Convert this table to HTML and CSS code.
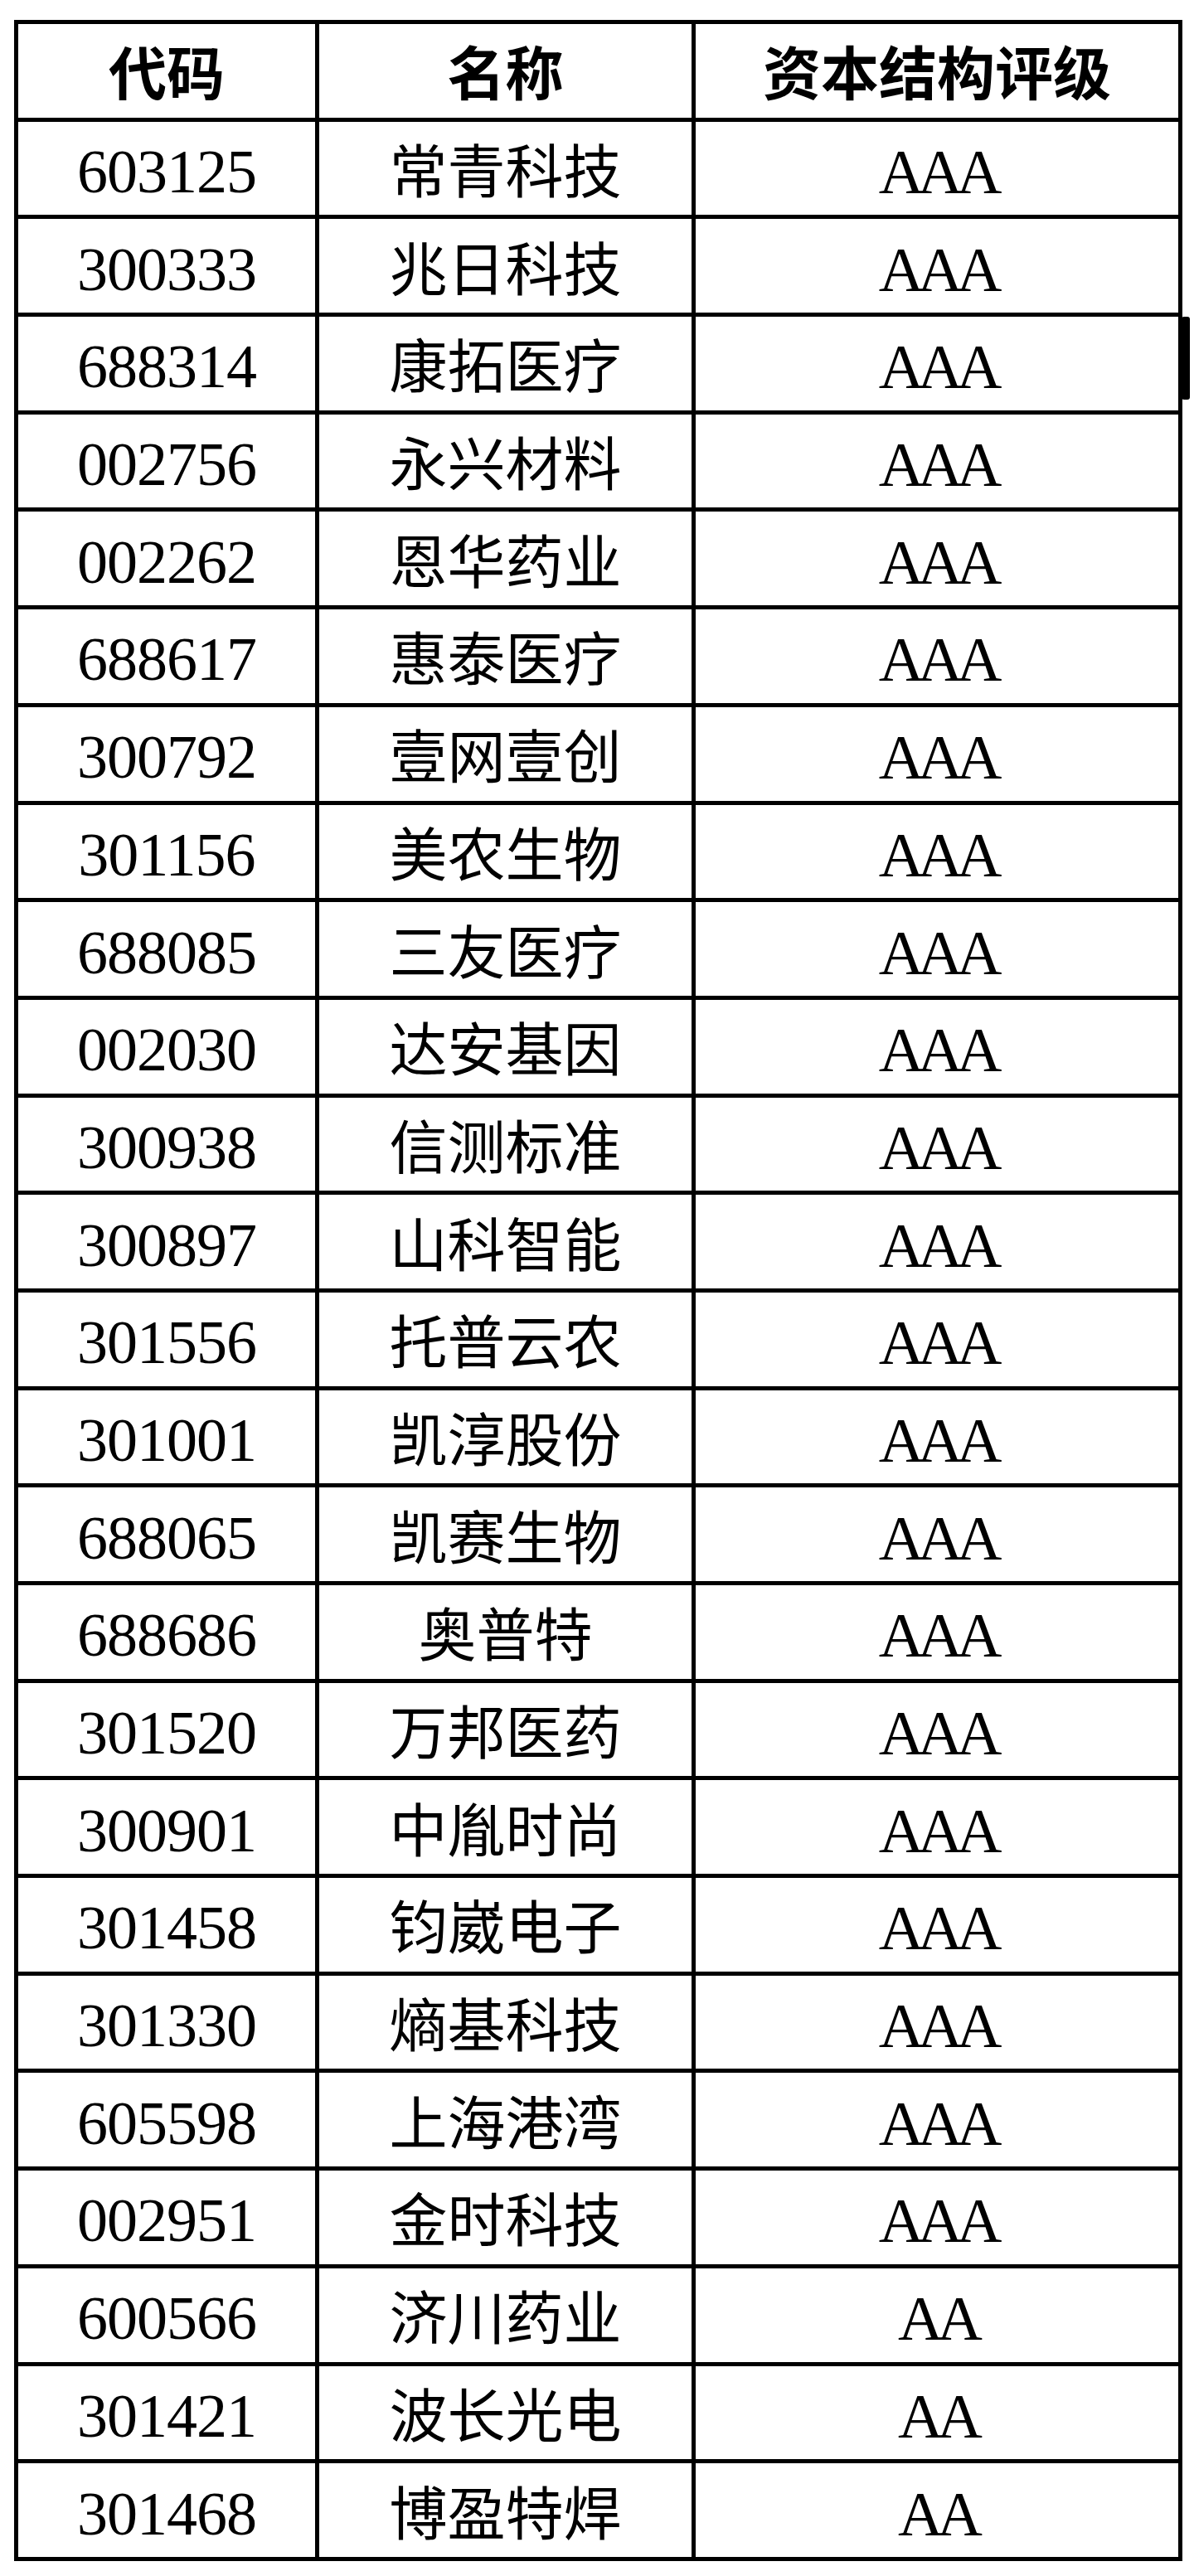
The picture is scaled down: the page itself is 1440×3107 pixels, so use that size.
FILE: index.html
```html
<!DOCTYPE html>
<html lang="zh-CN">
<head>
<meta charset="utf-8">
<title>资本结构评级</title>
<link rel="stylesheet" href="styles.css">
</head>
<body>
<div class="page">
<table class="rating-table">
<colgroup><col class="c1"><col class="c2"><col class="c3"></colgroup>
<thead>
<tr class="head-row"><th>代码</th><th>名称</th><th>资本结构评级</th></tr>
</thead>
<tbody>
<tr><td class="code">603125</td><td class="name">常青科技</td><td class="grade">AAA</td></tr>
<tr><td class="code">300333</td><td class="name">兆日科技</td><td class="grade">AAA</td></tr>
<tr><td class="code">688314</td><td class="name">康拓医疗</td><td class="grade">AAA</td></tr>
<tr><td class="code">002756</td><td class="name">永兴材料</td><td class="grade">AAA</td></tr>
<tr><td class="code">002262</td><td class="name">恩华药业</td><td class="grade">AAA</td></tr>
<tr><td class="code">688617</td><td class="name">惠泰医疗</td><td class="grade">AAA</td></tr>
<tr><td class="code">300792</td><td class="name">壹网壹创</td><td class="grade">AAA</td></tr>
<tr><td class="code">301156</td><td class="name">美农生物</td><td class="grade">AAA</td></tr>
<tr><td class="code">688085</td><td class="name">三友医疗</td><td class="grade">AAA</td></tr>
<tr><td class="code">002030</td><td class="name">达安基因</td><td class="grade">AAA</td></tr>
<tr><td class="code">300938</td><td class="name">信测标准</td><td class="grade">AAA</td></tr>
<tr><td class="code">300897</td><td class="name">山科智能</td><td class="grade">AAA</td></tr>
<tr><td class="code">301556</td><td class="name">托普云农</td><td class="grade">AAA</td></tr>
<tr><td class="code">301001</td><td class="name">凯淳股份</td><td class="grade">AAA</td></tr>
<tr><td class="code">688065</td><td class="name">凯赛生物</td><td class="grade">AAA</td></tr>
<tr><td class="code">688686</td><td class="name">奥普特</td><td class="grade">AAA</td></tr>
<tr><td class="code">301520</td><td class="name">万邦医药</td><td class="grade">AAA</td></tr>
<tr><td class="code">300901</td><td class="name">中胤时尚</td><td class="grade">AAA</td></tr>
<tr><td class="code">301458</td><td class="name">钧崴电子</td><td class="grade">AAA</td></tr>
<tr><td class="code">301330</td><td class="name">熵基科技</td><td class="grade">AAA</td></tr>
<tr><td class="code">605598</td><td class="name">上海港湾</td><td class="grade">AAA</td></tr>
<tr><td class="code">002951</td><td class="name">金时科技</td><td class="grade">AAA</td></tr>
<tr><td class="code">600566</td><td class="name">济川药业</td><td class="grade">AA</td></tr>
<tr><td class="code">301421</td><td class="name">波长光电</td><td class="grade">AA</td></tr>
<tr><td class="code">301468</td><td class="name">博盈特焊</td><td class="grade">AA</td></tr>
</tbody>
</table>
<div class="scroll-thumb"></div>
</div>
</body>
</html>
```

FILE: styles.css
```css
html, body {
  margin: 0;
  padding: 0;
  background: #ffffff;
}

.page {
  position: relative;
  width: 1440px;
  padding-top: 24px;
  padding-left: 17px;
  box-sizing: border-box;
}

.rating-table {
  border-collapse: collapse;
  table-layout: fixed;
  width: 1404px;
  color: #000;
}

.c1 { width: 363px; }
.c2 { width: 454px; }
.c3 { width: 587px; }

.rating-table tr {
  height: 117.7px;
}

.rating-table th,
.rating-table td {
  border: 5px solid #000;
  padding: 0;
  text-align: center;
  vertical-align: middle;
  line-height: 1;
}

.rating-table th {
  font-family: "Noto Sans CJK SC", sans-serif;
  font-weight: 700;
  font-size: 70px;
}

.code {
  font-family: "Liberation Serif", serif;
  font-size: 74px;
  letter-spacing: -1px;
  padding-top: 8px !important;
}

.name {
  font-family: "Noto Sans CJK SC", sans-serif;
  font-size: 70px;
  font-weight: 400;
}

.grade {
  font-family: "Liberation Serif", serif;
  font-size: 76px;
  letter-spacing: -8px;
  padding-top: 8px !important;
}

.scroll-thumb {
  position: absolute;
  left: 1425px;
  top: 382px;
  width: 10px;
  height: 100px;
  background: #000;
  border-radius: 3px;
}
```
